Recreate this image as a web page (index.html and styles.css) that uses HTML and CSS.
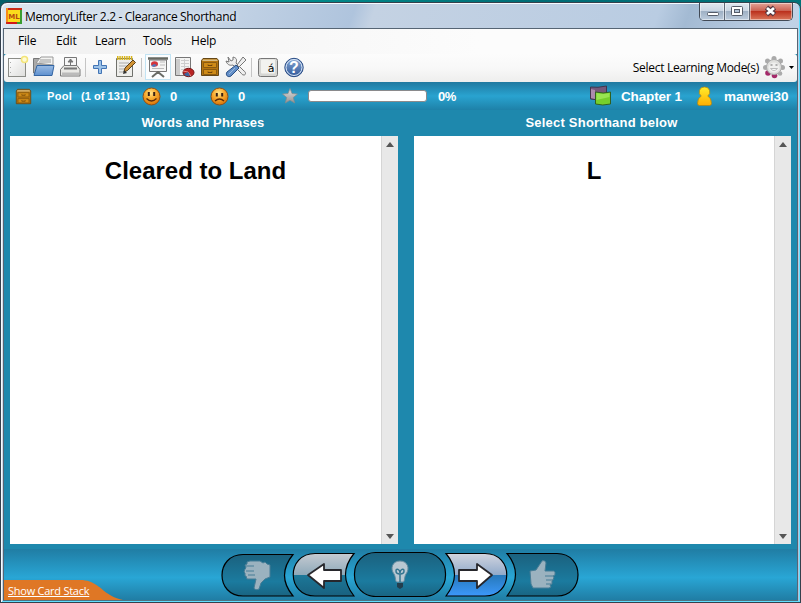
FILE: index.html
```
<!DOCTYPE html>
<html lang="en">
<head>
<meta charset="utf-8">
<title>MemoryLifter 2.2 - Clearance Shorthand</title>
<link rel="stylesheet" href="styles.css">
</head>
<body>
<svg width="0" height="0" class="defs">
  <defs>
    <linearGradient id="dark" x1="0" y1="0" x2="0" y2="1"><stop offset="0" stop-color="#1b617e"/><stop offset=".65" stop-color="#1b7b9f"/><stop offset="1" stop-color="#196482"/></linearGradient>
    <linearGradient id="back" x1="0" y1="0" x2="0" y2="1"><stop offset="0" stop-color="#c5cbd2"/><stop offset=".5" stop-color="#8fa9b9"/><stop offset=".5" stop-color="#1c7899"/><stop offset="1" stop-color="#19617f"/></linearGradient>
    <linearGradient id="next" x1="0" y1="0" x2="0" y2="1"><stop offset="0" stop-color="#d2d5df"/><stop offset=".5" stop-color="#91aaca"/><stop offset=".5" stop-color="#2678b9"/><stop offset="1" stop-color="#3c98fb"/></linearGradient>
    <radialGradient id="face" cx=".45" cy=".3" r=".7"><stop offset="0" stop-color="#ffe58b"/><stop offset=".45" stop-color="#f9ad31"/><stop offset="1" stop-color="#d87308"/></radialGradient>
    <linearGradient id="folder" x1="0" y1="0" x2="0" y2="1"><stop offset="0" stop-color="#9bbce3"/><stop offset="1" stop-color="#5e90cf"/></linearGradient>
    <linearGradient id="paper" x1="0" y1="0" x2="1" y2="1"><stop offset="0" stop-color="#fff"/><stop offset="1" stop-color="#dededc"/></linearGradient>
    <linearGradient id="help" x1="0" y1="0" x2="0" y2="1"><stop offset="0" stop-color="#89a9d4"/><stop offset="1" stop-color="#2e5699"/></linearGradient>
    <linearGradient id="star" x1="0" y1="0" x2="0" y2="1"><stop offset="0" stop-color="#e3e3e3"/><stop offset="1" stop-color="#929292"/></linearGradient>
    <linearGradient id="user" x1="0" y1="0" x2="0" y2="1"><stop offset="0" stop-color="#ffee2c"/><stop offset="1" stop-color="#ffad00"/></linearGradient>
    <symbol id="drawer" viewBox="0 0 20 20">
      <path d="M3 1.500h14l1.500 2v15h-17v-15z" fill="#b5750f" stroke="#654716"/>
      <path d="M3 2.500h14l.8 1.600H2.200z" fill="#d9bd83"/>
      <path d="M3.500 5.500h13v5h-13zM3.500 12.500h13v5h-13z" fill="#cf8b17" stroke="#8b5b10"/>
      <path d="M8 7.500v1h4v-1M8 14.500v1h4v-1" fill="none" stroke="#5a3607" stroke-width=".8"/>
    </symbol>
  </defs>
</svg>
<div class="window">
  <header class="titlebar">
    <svg class="logo" width="16" height="16"><rect x="1" y="1" width="14" height="14" fill="#fbdc1c" stroke="#cc2b16" stroke-width="2"/><path d="M1 0v14" stroke="#f88b18" stroke-width="2"/><path d="M2 15h9" stroke="#d11919" stroke-width="2"/><path d="M15 2v13h-4" fill="none" stroke="#399d30" stroke-width="2"/><text x="8" y="10.500" text-anchor="middle" class="logo-text">ML</text></svg>
    <h1 class="title">MemoryLifter 2.2 - Clearance Shorthand</h1>
    <div class="controls">
      <span class="control"><svg width="25" height="17"><rect x="7.500" y="9.500" width="11" height="3" rx="1" fill="#fff" stroke="#555c69"/></svg></span>
      <span class="control"><svg width="25" height="17"><rect x="6.500" y="3.500" width="11" height="9" rx="1" fill="#fff" stroke="#555c69"/><rect x="9.500" y="6.500" width="5" height="3" fill="#b2c3d6" stroke="#555c69"/></svg></span>
      <span class="control close"><svg width="42" height="17"><path d="M16.500 4.500l8 7M24.500 4.500l-8 7" stroke="#523640" stroke-width="5"/><path d="M17 5l7 6M24 5l-7 6" stroke="#fff" stroke-width="2.800"/></svg></span>
    </div>
  </header>
  <main class="client">
    <nav class="menu"><span>File</span><span>Edit</span><span>Learn</span><span>Tools</span><span>Help</span></nav>
    <div class="toolbar">
      <svg viewBox="0 0 26 26"><rect x="4.500" y="4.500" width="17" height="18" fill="url(#paper)" stroke="#8b8c87"/><path d="M6.500 8v1M6.500 13v1M6.500 18v1" stroke="#aaa"/><circle cx="20.500" cy="5.500" r="3" fill="#fffbd2" stroke="#f3e477" stroke-width="1.500"/></svg>
      <svg viewBox="0 0 26 26"><path d="M3.500 19V4.500h7l2 2h9V20z" fill="#aaa" stroke="#777"/><path d="M6 9l5-6h12v8z" fill="#f4f4f2" stroke="#999"/><path d="M10 6h11M9 8h12" stroke="#999"/><path d="M4 21.500l3-10h17l-2 10z" fill="url(#folder)" stroke="#3365a3"/></svg>
      <svg viewBox="0 0 26 26"><path d="M7.500 13V3.500h12V13" fill="#f7f7f7" stroke="#777"/><path d="M13.500 5v6M11 8l2.500-3L16 8z" stroke="#777" fill="#777"/><path d="M7 11.500h13l3 4v6.500H3.500v-6.500z" fill="#e9e9e6" stroke="#777"/><path d="M7 14.500h13" stroke="#777" stroke-width="2"/><path d="M5 20h17" stroke="#bbb" stroke-width="3"/></svg>
      <i class="sep"></i>
      <svg viewBox="0 0 26 26"><path d="M11.500 6.500h3v5h5v3h-5v5h-3v-5h-5v-3h5z" fill="#9cc2e8" stroke="#4274b5"/></svg>
      <svg viewBox="0 0 26 26"><path d="M3.500 4.500h16v18h-16z" fill="#eeeeeb" stroke="#70716c"/><path d="M4 4h16" stroke="#d8b51d" stroke-width="4" stroke-dasharray="1.500 .8"/><path d="M6 9h10M6 12h8M6 15h6M6 18h5" stroke="#aaa"/><path d="M11 18l1-4 8-8 2.500 2.500-8 8z" fill="#d19336" stroke="#594019"/><path d="M10 20l1-4 3 3z" fill="#333"/></svg>
      <i class="sep"></i>
      <svg viewBox="0 0 26 26" class="selected"><path d="M3 4.500h20" stroke="#666962" stroke-width="2.500"/><path d="M4.500 6h17v11.500h-17z" fill="#f5f5f4" stroke="#777"/><ellipse cx="9.500" cy="10" rx="3.500" ry="2.800" fill="#d3343b"/><path d="M9 10l3 1-3 2-3-1z" fill="#4d78bc"/><path d="M15 8h5M15 11h5M7 14.500h12" stroke="#bbb"/><path d="M13 17v3M13 18l-6 5M13 18l6 5" stroke="#696b66" stroke-width="2"/></svg>
      <svg viewBox="0 0 26 26"><path d="M4.500 3.500h15v18h-15z" fill="#f3f3f2" stroke="#777"/><path d="M5 5h4v16H5z" fill="#ccc"/><path d="M10 6.500h8M10 9.500h8M10 12.500h8M10 15.500h5M13.500 5v15" stroke="#ccc"/><ellipse cx="17.500" cy="18.500" rx="5.500" ry="4.200" fill="#b92424" stroke="#721313"/><path d="M17 18l-5-1M17 18l3 4" stroke="#e78b88"/><path d="M13 20q2 3 6 2l-2-4z" fill="#3c669e"/></svg>
      <svg viewBox="-3 -3 26 26"><use href="#drawer" width="20" height="20"/></svg>
      <svg viewBox="0 0 26 26"><path d="M5 3l3 4 2-1 0-3c4 1 4 3 3 6l8 8c2 1 2 4 0 4s-2-1-3-2l-8-8c-4 1-6-1-7-4l3 1z" fill="#eee" stroke="#777"/><path d="M20 3l3 3-7 7-2-2z" fill="#eee" stroke="#777"/><path d="M13 11l3 3-8 8c-3 2-6-1-4-4z" fill="#638fc8" stroke="#294f85"/><path d="M12 14l-6 6" stroke="#9bbbe0"/></svg>
      <i class="sep"></i>
      <svg viewBox="0 0 26 26"><rect x="3.500" y="4.500" width="19" height="18" rx="2" fill="#d6d6d3" stroke="#777"/><rect x="6" y="5.500" width="14" height="14" rx="1" fill="#f2f2ef"/><text x="16" y="18" text-anchor="middle" class="accent">á</text></svg>
      <svg viewBox="0 0 26 26"><circle cx="13" cy="13.500" r="9.200" fill="url(#help)" stroke="#294c85"/><circle cx="13" cy="13.500" r="8" fill="none" stroke="#dce8f8"/><text x="13" y="19" text-anchor="middle" class="question">?</text></svg>
      <span class="modes">Select Learning Mode(s)</span>
      <svg class="gear" viewBox="0 0 24 24">
        <g fill="#aaa"><circle cx="12" cy="3.500" r="2.500"/><circle cx="18.500" cy="6" r="2.500"/><circle cx="20.500" cy="12.500" r="2.500"/><circle cx="18" cy="18.500" r="2.300"/><circle cx="5.500" cy="6" r="2.500"/><circle cx="3.500" cy="12.500" r="2.500"/></g>
        <circle cx="6" cy="18" r="2.800" fill="#a42969"/><circle cx="12.500" cy="20.500" r="2.800" fill="#a42969"/>
        <circle cx="12" cy="12" r="7.500" fill="#dededc" stroke="#aaa"/><ellipse cx="12" cy="12.500" rx="5.500" ry="5" fill="#efefee"/><path d="M8.500 10h2M13.500 10h2" stroke="#999" stroke-width="1.500"/><path d="M8.500 13.500h7q-3.500 4-7 0" fill="#fff" stroke="#bbb"/>
      </svg>
      <svg class="caret" viewBox="0 0 7 5"><path d="M1 1h5L3.500 4z"/></svg>
    </div>
    <div class="status">
      <svg class="pool-icon" viewBox="0 0 20 20"><use href="#drawer" width="20" height="20"/></svg>
      <b class="pool">Pool</b><b class="count">(1 of 131)</b>
      <svg class="face" viewBox="0 0 19 19"><circle cx="9.500" cy="9.500" r="8.500" fill="url(#face)" stroke="#8c5018"/><path d="M6.800 5v4M12.200 5v4" stroke="#372014" stroke-width="2"/><path d="M4.500 11.500q5 5 10 0" fill="none" stroke="#5a2b0b" stroke-width="1.300"/></svg>
      <b class="right">0</b>
      <svg class="face" viewBox="0 0 19 19"><circle cx="9.500" cy="9.500" r="8.500" fill="url(#face)" stroke="#8c5018"/><path d="M6.800 6v3.500M12.200 6v3.500" stroke="#372014" stroke-width="2"/><path d="M5 14q4.500-4 9 0" fill="none" stroke="#5a2b0b" stroke-width="1.300"/></svg>
      <b class="wrong">0</b>
      <svg class="star" viewBox="0 0 16 16"><path d="M8 .5l2 5 5.500.5-4.200 3.500 1.400 5.500L8 12.200 3.300 15l1.400-5.500L.5 6l5.500-.5z" fill="url(#star)" stroke="#85898b" stroke-width=".7"/></svg>
      <div class="progress"></div><b class="percent">0%</b>
      <svg class="cards" viewBox="0 0 24 22"><path d="M1.500 2q7 1 16-1v13q-8 2-16 0z" fill="#765879" stroke="#41364c"/><path d="M2 4l4 1v9l-4-1z" fill="#ac8bad"/><path d="M6.500 7q8 2 15 0v12q-8 2-15 0z" fill="#76cf2b" stroke="#315f20"/><path d="M7.500 8q7 2 13 0v4l-13 3z" fill="#98e451"/></svg>
      <b class="chapter">Chapter 1</b>
      <svg class="person" viewBox="0 0 17 21"><path d="M8.500 1a5 5 0 0 1 3.300 9q3.700 2 3.700 7.500 0 2-2 2h-10q-2 0-2-2Q1.500 12 5.200 10a5 5 0 0 1 3.300-9z" fill="url(#user)" stroke="#aa8516" stroke-width=".8"/></svg>
      <b class="username">manwei30</b>
    </div>
    <div class="columns">
      <section class="column"><h2><span class="head-left">Words and Phrases</span></h2><div class="card"><p><span class="phrase">Cleared to Land</span></p><div class="scroll"><svg viewBox="0 0 8 5"><path d="M0 5l4-5 4 5z"/></svg><svg viewBox="0 0 8 5"><path d="M0 0h8L4 5z"/></svg></div></div></section>
      <section class="column"><h2><span class="head-right">Select Shorthand below</span></h2><div class="card"><p><span>L</span></p><div class="scroll"><svg viewBox="0 0 8 5"><path d="M0 5l4-5 4 5z"/></svg><svg viewBox="0 0 8 5"><path d="M0 0h8L4 5z"/></svg></div></div></section>
    </div>
    <footer class="answers">
      <div class="stack"><svg viewBox="0 0 119 20" width="119" height="20"><path d="M0 0h76c15 0 20 9 30 15 5 3 9 4 13 5H0z" fill="#df7725"/></svg><a>Show Card Stack</a></div>
      <svg class="buttons" width="358" height="46" viewBox="0 0 358 46">
        <g stroke="#000" stroke-width="1.200">
          <path d="M22 3.500h50q-17 21 0 41.500H22C-6 45-6 3.500 22 3.500z" fill="url(#dark)"/>
          <path d="M94 2.500h39q-17 21 0 42.500H94C65 45 65 2.500 94 2.500z" fill="url(#back)"/>
          <rect x="133.500" y="1.500" width="91" height="44" rx="21" fill="url(#dark)"/>
          <path d="M225 2.500h39c29 0 29 42.500 0 42.500h-39q17-22 0-42.500z" fill="url(#next)"/>
          <path d="M286 2.500h50c28 0 28 42.500 0 42.500h-50q17-22 0-42.500z" fill="url(#dark)"/>
        </g>
        <path d="M29 10h10l3 2 2-1 2 2 3 1v12l-5 2-4 4-2 6c-1 1-5 1-5-1l2-9h-9l-1-3h-1v-3l-1-1 1-3 1-1-1-3 2-1v-2z" fill="#9bb2bf" stroke="#477d96" stroke-linejoin="round"/>
        <path d="M25 15h8M25 20h8M27 24h7" stroke="#477d96"/>
        <path d="M87 24l16-11v6h17v11h-17v7z" fill="#fff" stroke="#27272c" stroke-width="1.800" stroke-linejoin="round"/>
        <path d="M179 10c-8 0-10 8-6 13 2 3 1 8 3 8h6c2 0 1-5 3-8 4-5 2-13-6-13z" fill="#b8c8d2" stroke="#668da0"/><path d="M175 20c0-3 4-2 4 2 0-4 4-5 4-2s-3 3-4 3-4 0-4-3m4 3v8" fill="none" stroke="#347590" stroke-width="1.500"/><path d="M176 32h6v4l-3 2-3-2z" fill="#233e4d"/>
        <path d="M271 24l-15-11v6h-18v11h18v7z" fill="#fff" stroke="#27272c" stroke-width="1.800" stroke-linejoin="round"/>
        <path d="M309 20l6-1 6-9c1-1 4 0 4 2l-1 8h9l1 1v3l-2 1 1 1-1 3-1 1v3l-2 1 1 2-2 1h-16l-2-4z" fill="#9bb2bf" stroke="#477d96" stroke-linejoin="round"/>
        <path d="M324 25h8M325 29h7M325 33h5" stroke="#477d96"/>
      </svg>
    </footer>
  </main>
</div>
</body>
</html>
```
FILE: styles.css
```
* { box-sizing: border-box; }
body { margin: 0; width: 801px; height: 603px; overflow: hidden; background: linear-gradient(100deg, #055f69, #02918f 28%, #006c75 60%, #01767a); font-family: "Open Sans", sans-serif; }
svg { display: block; flex: none; }
.defs { position: absolute; }
.window { height: 601px; margin-top: 2px; padding: 0 2px 1px; border: 1px solid #35404c; border-radius: 7px 7px 0 0; background: linear-gradient(110deg, #dce5ee 0, #cad8e8 18%, #afc4dd 35%, #c4d2e3 37%, #b9cce2 65%, #a3bad3 68%, #c1d2e6 78%, #aec3dc); box-shadow: inset 1px 1px #f7fbff, inset -1px -1px #60dfff; }
.titlebar { height: 25px; display: flex; align-items: flex-start; }
.logo { margin: 5px 3px 0 3px; }
.logo-text { font: bold 7px "DejaVu Sans", sans-serif; fill: #b54912; }
.title { margin: 5px 0 0; font-size: 12px; line-height: 18px; font-weight: 400; letter-spacing: -.33px; white-space: nowrap; text-shadow: 0 0 5px #fff; }
.controls { height: 18px; display: flex; margin-left: auto; margin-right: 5px; border: 1px solid #424a56; border-top: 0; border-radius: 0 0 5px 5px; overflow: hidden; }
.control { width: 25px; background: linear-gradient(#e0e7ef, #cbd6e3 45%, #9dafc3 46%, #bdccdd); border-right: 1px solid #606a78; box-shadow: inset 0 0 0 1px #ffffff77; }
.control.close { width: 42px; background: linear-gradient(#e3a397, #cb6353 45%, #b92c19 46%, #da775b); border: 0; }
.client { height: 573px; display: flex; flex-direction: column; border: 1px solid #566574; border-bottom-color: #4f7182; background: #1e88ad; }
.menu { flex: 0 0 25px; display: grid; grid-template-columns: 38px 39px 48px 48px 60px; padding-left: 14px; background: linear-gradient(90deg, #f0f0f0, #fcfcfc 60%); font-size: 12px; line-height: 24px; }
.menu span { letter-spacing: -.2px; }
.toolbar { flex: 0 0 28px; display: grid; grid-template-columns: 26px 27px 26px 4px 26px 26px 6px 26px 26px 26px 26px 6px 26px 26px 1fr 24px 11px; align-items: center; padding-bottom: 2px; border-radius: 3px; background: linear-gradient(#fcfcfc, #f8f8f8 50%, #eeeeed); }
.toolbar > svg { height: 26px; width: 26px; }
.sep { width: 1px; height: 19px; margin-left: 2px; background: #c5c5c5; }
.toolbar .selected { outline: 1px solid #c2e3f3; outline-offset: -1px; background: #fbfdfe; }
.modes { justify-self: end; font-size: 12px; letter-spacing: -.3px; margin-right: 3px; }
.toolbar > .gear { width: 24px; height: 24px; }
.toolbar > .caret { width: 7px; height: 5px; justify-self: center; }
.accent { font: 11px "DejaVu Sans", sans-serif; }
.question { font: bold 16px "Liberation Sans", sans-serif; fill: #fff; }
.status { flex: 0 0 28px; display: flex; align-items: center; color: #fff; font-family: "Liberation Sans", sans-serif; font-size: 13.500px; background: linear-gradient(#2079a0, #29a3d0 50%, #1e81a8); white-space: nowrap; }
.status b { display: block; }
.pool-icon { width: 17px; height: 17px; margin-left: 11px; }
.status .pool { width: 34px; margin-left: 15px; font-size: 11px; letter-spacing: .3px; }
.status .count { width: 61px; font-size: 11px; letter-spacing: .05px; }
.face { width: 19px; height: 19px; }
.right { width: 49px; padding-left: 9px; }
.wrong { width: 53px; padding-left: 9px; }
.star { width: 16px; height: 16px; }
.progress { width: 119px; height: 12px; margin-left: 10px; border: 1px solid #8a8a8c; border-radius: 3px; background: #fff; }
.percent { width: 162px; padding-left: 11px; letter-spacing: -.5px; }
.status .percent, .status .right, .status .wrong { font-size: 13px; }
.cards { width: 24px; height: 22px; }
.chapter { width: 72px; margin-left: 8px; letter-spacing: -.15px; }
.person { width: 17px; height: 21px; margin-left: 3px; }
.username { margin-left: 11px; }
.columns { height: 434px; margin-top: -1px; padding: 1px 6px 0; display: grid; grid-template-columns: 388px 377px; gap: 16px; }
.column { min-width: 0; }
.column h2 { height: 26px; margin: 0; color: #fff; font: bold 13px/25px "Liberation Sans", sans-serif; text-align: center; }
.head-left { letter-spacing: .1px; margin-right: 2px; }
.head-right { letter-spacing: .22px; margin-right: 2px; }
.card { height: 408px; display: flex; background: #fff; }
.card p { flex: 1; margin: 20px 0 0; text-align: center; font: bold 24px/30px "Liberation Sans", sans-serif; white-space: nowrap; }
.scroll { width: 17px; display: flex; flex-direction: column; align-items: center; justify-content: space-between; padding: 6px 0 5px; background: #e8e8e8; border-left: 1px solid #d5d5d5; }
.scroll svg { width: 8px; height: 5px; fill: #555; }
.answers { flex: 1; margin-top: 6px; display: flex; background: linear-gradient(#207da4, #29a6d5 56%, #207da4); }
.stack { width: 217px; align-self: flex-end; display: grid; }
.stack svg, .stack a { grid-area: 1 / 1; }
.stack a { align-self: center; padding-left: 4px; color: #fff; font-size: 11px; line-height: 19px; letter-spacing: -.25px; text-decoration: underline; }
.buttons { margin-top: 2px; }
```
